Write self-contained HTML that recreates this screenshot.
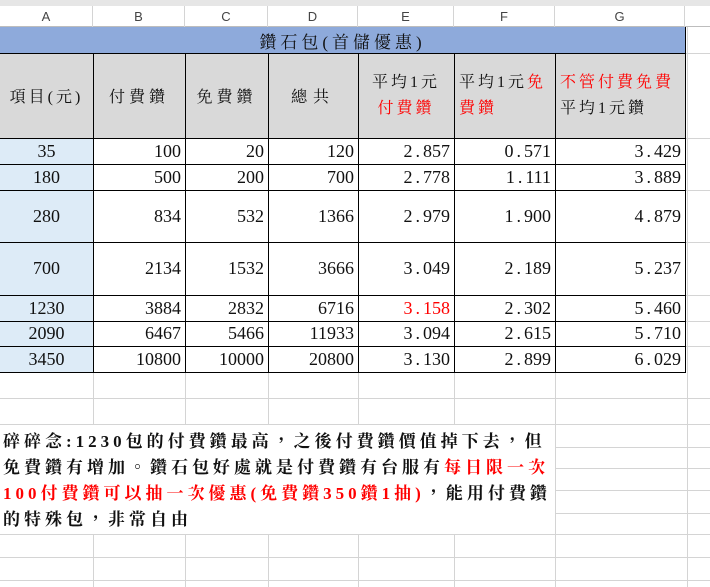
<!DOCTYPE html>
<html><head><meta charset="utf-8"><style>
*{margin:0;padding:0;box-sizing:border-box}
body{width:710px;height:587px;overflow:hidden;background:#fff;position:relative;font-family:"Liberation Serif","Noto Serif CJK TC","Noto Serif CJK SC",serif}
.gl{position:absolute;background:#d4d4d4}
.c{position:absolute;display:flex;align-items:center;font-size:18px;color:#111;white-space:nowrap}
.r{justify-content:flex-end;padding-right:4px}
.m{justify-content:center}
.hb{position:absolute;background:#000}
.colh{position:absolute;top:6px;height:21px;font:13px "Liberation Sans",sans-serif;color:#444;display:flex;align-items:center;justify-content:center;border-right:1px solid #d4d4d4}
.red{color:#f00}
.d{margin:0 3px}
</style></head><body>
<div style="position:absolute;left:0;top:0;width:710px;height:6px;background:#e6e6e6"></div>
<div style="position:absolute;left:0;top:26px;width:710px;height:1px;background:#bdbdbd"></div>
<div class="colh" style="left:0;width:93px">A</div>
<div class="colh" style="left:93px;width:92px">B</div>
<div class="colh" style="left:185px;width:83px">C</div>
<div class="colh" style="left:268px;width:90px">D</div>
<div class="colh" style="left:358px;width:96px">E</div>
<div class="colh" style="left:454px;width:101px">F</div>
<div class="colh" style="left:555px;width:130px">G</div>

<div class="gl" style="left:685px;top:53px;width:25px;height:1px"></div>
<div class="gl" style="left:685px;top:138px;width:25px;height:1px"></div>
<div class="gl" style="left:685px;top:190px;width:25px;height:1px"></div>
<div class="gl" style="left:685px;top:242px;width:25px;height:1px"></div>
<div class="gl" style="left:685px;top:295px;width:25px;height:1px"></div>
<div class="gl" style="left:685px;top:321px;width:25px;height:1px"></div>
<div class="gl" style="left:685px;top:346px;width:25px;height:1px"></div>
<div class="gl" style="left:0;top:398px;width:710px;height:1px"></div>
<div class="gl" style="left:0;top:424px;width:710px;height:1px"></div>
<div class="gl" style="left:555px;top:447px;width:155px;height:1px"></div>
<div class="gl" style="left:555px;top:468px;width:155px;height:1px"></div>
<div class="gl" style="left:555px;top:490px;width:155px;height:1px"></div>
<div class="gl" style="left:555px;top:513px;width:155px;height:1px"></div>
<div class="gl" style="left:0;top:534px;width:710px;height:1px"></div>
<div class="gl" style="left:0;top:557px;width:710px;height:1px"></div>
<div class="gl" style="left:0;top:580px;width:710px;height:1px"></div>
<div class="gl" style="left:93px;top:372px;width:1px;height:52px"></div>
<div class="gl" style="left:185px;top:372px;width:1px;height:52px"></div>
<div class="gl" style="left:268px;top:372px;width:1px;height:52px"></div>
<div class="gl" style="left:358px;top:372px;width:1px;height:52px"></div>
<div class="gl" style="left:454px;top:372px;width:1px;height:52px"></div>
<div class="gl" style="left:93px;top:534px;width:1px;height:53px"></div>
<div class="gl" style="left:185px;top:534px;width:1px;height:53px"></div>
<div class="gl" style="left:268px;top:534px;width:1px;height:53px"></div>
<div class="gl" style="left:358px;top:534px;width:1px;height:53px"></div>
<div class="gl" style="left:454px;top:534px;width:1px;height:53px"></div>
<div class="gl" style="left:555px;top:372px;width:1px;height:215px"></div>
<div class="gl" style="left:687px;top:27px;width:1px;height:560px"></div>

<div style="position:absolute;left:0;top:27px;width:685px;height:26px;background:#8eaadb"></div>
<div style="position:absolute;left:0;top:53px;width:685px;height:85px;background:#d9d9d9"></div>
<div style="position:absolute;left:0;top:138px;width:93px;height:234px;background:#ddebf7"></div>

<div class="hb" style="left:0;top:53px;width:686px;height:1px"></div>
<div class="hb" style="left:0;top:138px;width:686px;height:1px"></div>
<div class="hb" style="left:0;top:164px;width:686px;height:1px"></div>
<div class="hb" style="left:0;top:190px;width:686px;height:1px"></div>
<div class="hb" style="left:0;top:242px;width:686px;height:1px"></div>
<div class="hb" style="left:0;top:295px;width:686px;height:1px"></div>
<div class="hb" style="left:0;top:321px;width:686px;height:1px"></div>
<div class="hb" style="left:0;top:346px;width:686px;height:1px"></div>
<div class="hb" style="left:0;top:372px;width:686px;height:1px"></div>
<div class="hb" style="left:93px;top:53px;width:1px;height:320px"></div>
<div class="hb" style="left:185px;top:53px;width:1px;height:320px"></div>
<div class="hb" style="left:268px;top:53px;width:1px;height:320px"></div>
<div class="hb" style="left:358px;top:53px;width:1px;height:320px"></div>
<div class="hb" style="left:454px;top:53px;width:1px;height:320px"></div>
<div class="hb" style="left:555px;top:53px;width:1px;height:320px"></div>
<div class="hb" style="left:685px;top:27px;width:1px;height:346px"></div>

<div class="c m" style="left:0;top:27px;width:685px;height:26px;font-size:17px;letter-spacing:4px">鑽石包(首儲優惠)</div>
<div class="c m" style="left:0;top:53px;width:93px;height:85px;font-size:16px;letter-spacing:3px">項目(元)</div>
<div class="c m" style="left:93px;top:53px;width:92px;height:85px;font-size:16px;letter-spacing:4px">付費鑽</div>
<div class="c m" style="left:185px;top:53px;width:83px;height:85px;font-size:16px;letter-spacing:4px">免費鑽</div>
<div class="c m" style="left:268px;top:53px;width:90px;height:85px;font-size:16px;letter-spacing:6px">總共</div>
<div class="c m" style="left:358px;top:53px;width:96px;height:85px;font-size:16px;letter-spacing:3px;white-space:normal;text-align:center;line-height:26px"><div>平均1元<br><span class="red">付費鑽</span></div></div>
<div class="c" style="left:454px;top:53px;width:101px;height:85px;font-size:16px;letter-spacing:3px;white-space:normal;line-height:26px;padding-left:5px"><div>平均1元<span class="red">免</span><br><span class="red">費鑽</span></div></div>
<div class="c" style="left:555px;top:53px;width:130px;height:85px;font-size:16px;letter-spacing:3px;white-space:normal;line-height:26px;padding-left:5px"><div><span class="red">不管付費免費</span><br>平均1元鑽</div></div>

<div class="c m" style="left:0;top:138px;width:93px;height:26px">35</div>
<div class="c r" style="left:93px;top:138px;width:92px;height:26px">100</div>
<div class="c r" style="left:185px;top:138px;width:83px;height:26px">20</div>
<div class="c r" style="left:268px;top:138px;width:90px;height:26px">120</div>
<div class="c r" style="left:358px;top:138px;width:96px;height:26px">2<span class="d">.</span>857</div>
<div class="c r" style="left:454px;top:138px;width:101px;height:26px">0<span class="d">.</span>571</div>
<div class="c r" style="left:555px;top:138px;width:130px;height:26px">3<span class="d">.</span>429</div>

<div class="c m" style="left:0;top:164px;width:93px;height:26px">180</div>
<div class="c r" style="left:93px;top:164px;width:92px;height:26px">500</div>
<div class="c r" style="left:185px;top:164px;width:83px;height:26px">200</div>
<div class="c r" style="left:268px;top:164px;width:90px;height:26px">700</div>
<div class="c r" style="left:358px;top:164px;width:96px;height:26px">2<span class="d">.</span>778</div>
<div class="c r" style="left:454px;top:164px;width:101px;height:26px">1<span class="d">.</span>111</div>
<div class="c r" style="left:555px;top:164px;width:130px;height:26px">3<span class="d">.</span>889</div>

<div class="c m" style="left:0;top:190px;width:93px;height:52px">280</div>
<div class="c r" style="left:93px;top:190px;width:92px;height:52px">834</div>
<div class="c r" style="left:185px;top:190px;width:83px;height:52px">532</div>
<div class="c r" style="left:268px;top:190px;width:90px;height:52px">1366</div>
<div class="c r" style="left:358px;top:190px;width:96px;height:52px">2<span class="d">.</span>979</div>
<div class="c r" style="left:454px;top:190px;width:101px;height:52px">1<span class="d">.</span>900</div>
<div class="c r" style="left:555px;top:190px;width:130px;height:52px">4<span class="d">.</span>879</div>

<div class="c m" style="left:0;top:242px;width:93px;height:53px">700</div>
<div class="c r" style="left:93px;top:242px;width:92px;height:53px">2134</div>
<div class="c r" style="left:185px;top:242px;width:83px;height:53px">1532</div>
<div class="c r" style="left:268px;top:242px;width:90px;height:53px">3666</div>
<div class="c r" style="left:358px;top:242px;width:96px;height:53px">3<span class="d">.</span>049</div>
<div class="c r" style="left:454px;top:242px;width:101px;height:53px">2<span class="d">.</span>189</div>
<div class="c r" style="left:555px;top:242px;width:130px;height:53px">5<span class="d">.</span>237</div>

<div class="c m" style="left:0;top:295px;width:93px;height:26px">1230</div>
<div class="c r" style="left:93px;top:295px;width:92px;height:26px">3884</div>
<div class="c r" style="left:185px;top:295px;width:83px;height:26px">2832</div>
<div class="c r" style="left:268px;top:295px;width:90px;height:26px">6716</div>
<div class="c r red" style="left:358px;top:295px;width:96px;height:26px">3<span class="d">.</span>158</div>
<div class="c r" style="left:454px;top:295px;width:101px;height:26px">2<span class="d">.</span>302</div>
<div class="c r" style="left:555px;top:295px;width:130px;height:26px">5<span class="d">.</span>460</div>

<div class="c m" style="left:0;top:321px;width:93px;height:25px">2090</div>
<div class="c r" style="left:93px;top:321px;width:92px;height:25px">6467</div>
<div class="c r" style="left:185px;top:321px;width:83px;height:25px">5466</div>
<div class="c r" style="left:268px;top:321px;width:90px;height:25px">11933</div>
<div class="c r" style="left:358px;top:321px;width:96px;height:25px">3<span class="d">.</span>094</div>
<div class="c r" style="left:454px;top:321px;width:101px;height:25px">2<span class="d">.</span>615</div>
<div class="c r" style="left:555px;top:321px;width:130px;height:25px">5<span class="d">.</span>710</div>

<div class="c m" style="left:0;top:346px;width:93px;height:26px">3450</div>
<div class="c r" style="left:93px;top:346px;width:92px;height:26px">10800</div>
<div class="c r" style="left:185px;top:346px;width:83px;height:26px">10000</div>
<div class="c r" style="left:268px;top:346px;width:90px;height:26px">20800</div>
<div class="c r" style="left:358px;top:346px;width:96px;height:26px">3<span class="d">.</span>130</div>
<div class="c r" style="left:454px;top:346px;width:101px;height:26px">2<span class="d">.</span>899</div>
<div class="c r" style="left:555px;top:346px;width:130px;height:26px">6<span class="d">.</span>029</div>

<div style="position:absolute;left:3px;top:429px;width:560px;font-size:17px;font-weight:bold;line-height:26px;letter-spacing:4px;color:#111;white-space:nowrap">碎碎念:1230包的付費鑽最高，之後付費鑽價值掉下去，但<br>免費鑽有增加。鑽石包好處就是付費鑽有台服有<span class="red">每日限一次</span><br><span class="red">100付費鑽可以抽一次優惠(免費鑽350鑽1抽)</span>，能用付費鑽<br>的特殊包，非常自由</div>
</body></html>
